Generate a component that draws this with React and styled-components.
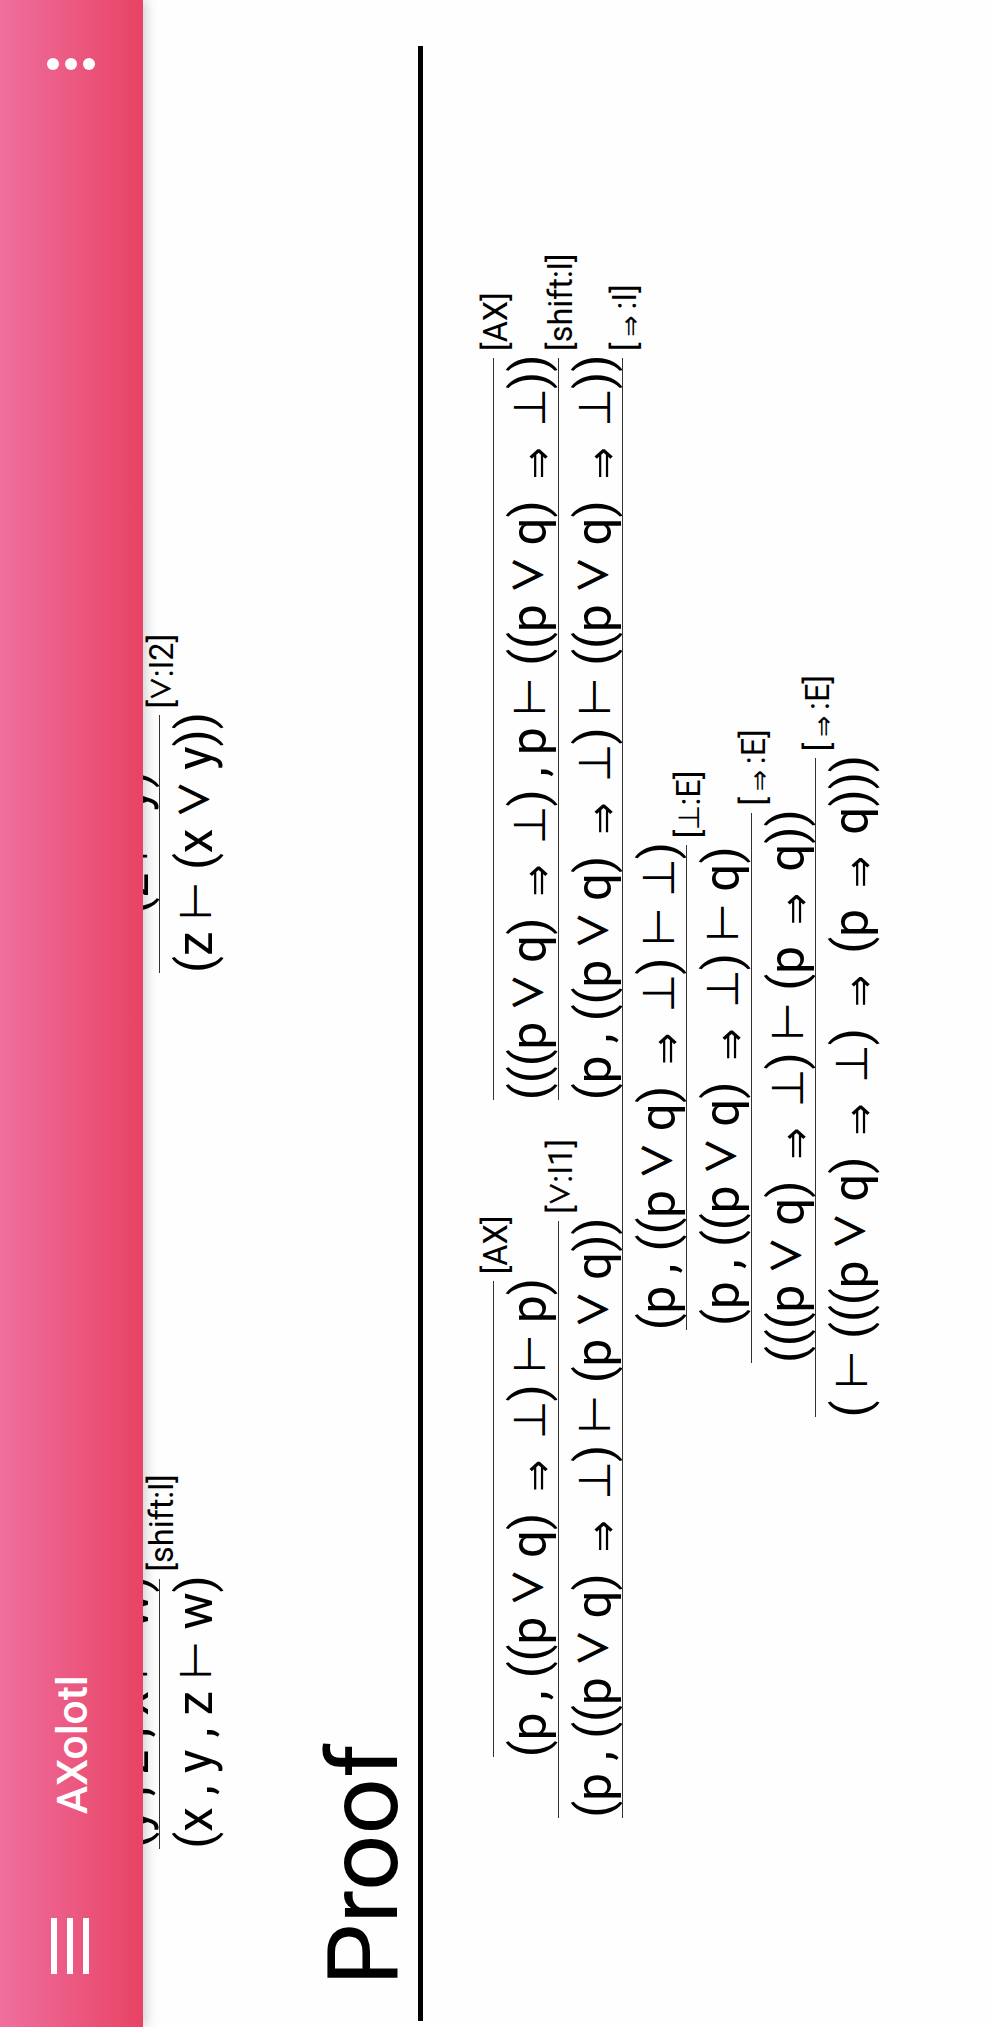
import React from "react";
import styled, { createGlobalStyle, css } from "styled-components";

const GlobalStyle = createGlobalStyle`
  html, body { margin: 0; padding: 0; background: #fff; }
  body { width: 994px; height: 2027px; overflow: hidden; }
`;

const Device = styled.div`
  width: 994px;
  height: 2027px;
  overflow: hidden;
  background: #fefefe;
`;

const Screen = styled.div`
  width: 2027px;
  height: 994px;
  display: flex;
  flex-direction: column;
  transform-origin: 0 0;
  transform: translateY(2027px) rotate(-90deg);
  font-family: Roboto, "Noto Sans", sans-serif;
  color: #000;
`;

const AppBar = styled.header`
  flex: none;
  box-sizing: border-box;
  height: 143px;
  padding: 0 58px 0 53px;
  display: flex;
  align-items: center;
  background: linear-gradient(to bottom, #ef6f9f, #e84364);
  box-shadow: 0 2px 12px rgba(0, 0, 0, 0.22);
  z-index: 1;
`;

const MenuIcon = styled.div`
  display: flex;
  flex-direction: column;
  gap: 10px;
  margin-top: -3px;
`;

const MenuBar = styled.span`
  width: 56px;
  height: 6px;
  background: #fff;
`;

const Title = styled.h1`
  flex: 1;
  margin: 3px 0 0 104px;
  font-size: 42.5px;
  line-height: 50px;
  font-weight: 500;
  color: #fff;
`;

const MoreIcon = styled.div`
  display: flex;
  flex-direction: column;
  gap: 6px;
  margin-bottom: 1px;
`;

const Dot = styled.span`
  width: 12px;
  height: 12px;
  border-radius: 50%;
  background: #fff;
`;

const Content = styled.main`
  flex: 1;
  min-height: 0;
`;

const PreviousRules = styled.section`
  display: flex;
  align-items: flex-start;
  gap: 605.6px;
  margin-top: -47.5px;
  padding-left: 178.3px;
`;

const Heading = styled.h2`
  margin: 71.8px 0 0 6px;
  padding-left: 35px;
  box-sizing: border-box;
  width: 1975px;
  height: 128px;
  border-bottom: 5px solid #000;
  font-size: 99px;
  line-height: 137px;
  font-weight: 400;
`;

const ProofArea = styled.section`
  display: flex;
  padding: 70.45px 0 0 209.3px;
`;

const Node = styled.div`
  display: flex;
  flex-direction: column;
  align-items: center;
`;

const Premises = styled.div`
  display: flex;
  align-items: flex-end;
  gap: 120.6px;
`;

const Step = styled.div`
  align-self: center;
  display: flex;
  flex-direction: column;
  align-items: center;
`;

const Rule = styled.div`
  align-self: stretch;
  height: 1px;
  background: #333;
  display: flex;
  justify-content: flex-end;
`;

const RuleLabel = styled.span`
  width: 0;
  height: 1px;
  overflow: visible;
  white-space: pre;
  text-indent: 7px;
  font-size: 32.4px;
  line-height: 6.6px;
`;

const Formula = styled.div`
  height: 63.33px;
  margin-right: -3.3px;
  line-height: 71.5px;
  font-size: 49.4px;
  white-space: pre;
`;

const operatorStyles = {
  "⊢": css`
    width: 0.748em;
    --size: 0.9em;
    --lift: 0.02em;
  `,
  "⊥": css`
    width: 0.745em;
    --size: 0.9em;
    --lift: 0.02em;
  `,
  "∨": css`
    width: 0.694em;
    --size: 0.735em;
    --lift: 0.13em;
    --stretch: 1.05;
    --face: "Noto Sans CJK SC";
    -webkit-text-stroke: 0.025em #000;
  `,
  "⇒": css`
    width: 1.01em;
    --size: 1.05em;
    --lift: -0.124em;
    --stretch: 1.08;
    --face: "DejaVu Sans Mono";
  `,
};

const Operator = styled.span`
  display: inline-flex;
  justify-content: center;
  text-indent: 0;
  --face: "DejaVu Sans";
  --stretch: 1;
  ${(p) => operatorStyles[p.$symbol]}
`;

const Glyph = styled.span`
  font-family: var(--face), "DejaVu Sans", sans-serif;
  font-size: var(--size);
  line-height: 0;
  transform: translateY(calc(-1 * var(--lift))) scaleY(var(--stretch));
`;

function MathText({ children }) {
  return children.split(/([⊢⊥∨⇒])/).map((part, i) =>
    operatorStyles[part] ? (
      <Operator key={i} $symbol={part}>
        <Glyph>{part}</Glyph>
      </Operator>
    ) : (
      part
    )
  );
}

function Sequent({ children }) {
  return (
    <Formula>
      <MathText>{children}</MathText>
    </Formula>
  );
}

function Inference({ label }) {
  return (
    <Rule>
      <RuleLabel>
        <MathText>{label}</MathText>
      </RuleLabel>
    </Rule>
  );
}

export default function App() {
  return (
    <>
      <GlobalStyle />
      <Device>
        <Screen>
          <AppBar>
            <MenuIcon>
              <MenuBar />
              <MenuBar />
              <MenuBar />
            </MenuIcon>
            <Title>AXolotl</Title>
            <MoreIcon>
              <Dot />
              <Dot />
              <Dot />
            </MoreIcon>
          </AppBar>
          <Content>
            <PreviousRules>
              <Node>
                <Sequent>(y , z , x ⊢ w)</Sequent>
                <Inference label="[shift:l]" />
                <Sequent>(x , y , z ⊢ w)</Sequent>
              </Node>
              <Node>
                <Sequent>(z ⊢ y)</Sequent>
                <Inference label="[∨:I2]" />
                <Sequent>(z ⊢ (x ∨ y))</Sequent>
              </Node>
            </PreviousRules>
            <Heading>Proof</Heading>
            <ProofArea>
              <Node>
                <Premises>
                  <Node>
                    <Step>
                      <Inference label="[AX]" />
                      <Sequent>(p , ((p ∨ q) ⇒ ⊥) ⊢ p)</Sequent>
                    </Step>
                    <Inference label="[∨:I1]" />
                    <Sequent>(p , ((p ∨ q) ⇒ ⊥) ⊢ (p ∨ q))</Sequent>
                  </Node>
                  <Node>
                    <Step>
                      <Inference label="[AX]" />
                      <Sequent>(((p ∨ q) ⇒ ⊥) , p ⊢ ((p ∨ q) ⇒ ⊥))</Sequent>
                    </Step>
                    <Inference label="[shift:l]" />
                    <Sequent>(p , ((p ∨ q) ⇒ ⊥) ⊢ ((p ∨ q) ⇒ ⊥))</Sequent>
                  </Node>
                </Premises>
                <Inference label="[⇒:I]" />
                <Step>
                  <Step>
                    <Step>
                      <Sequent>(p , ((p ∨ q) ⇒ ⊥) ⊢ ⊥)</Sequent>
                      <Inference label="[⊥:E]" />
                      <Sequent>(p , ((p ∨ q) ⇒ ⊥) ⊢ q)</Sequent>
                    </Step>
                    <Inference label="[⇒:E]" />
                    <Sequent>(((p ∨ q) ⇒ ⊥) ⊢ (p ⇒ q))</Sequent>
                  </Step>
                  <Inference label="[⇒:E]" />
                  <Sequent>( ⊢ (((p ∨ q) ⇒ ⊥) ⇒ (p ⇒ q)))</Sequent>
                </Step>
              </Node>
            </ProofArea>
          </Content>
        </Screen>
      </Device>
    </>
  );
}
